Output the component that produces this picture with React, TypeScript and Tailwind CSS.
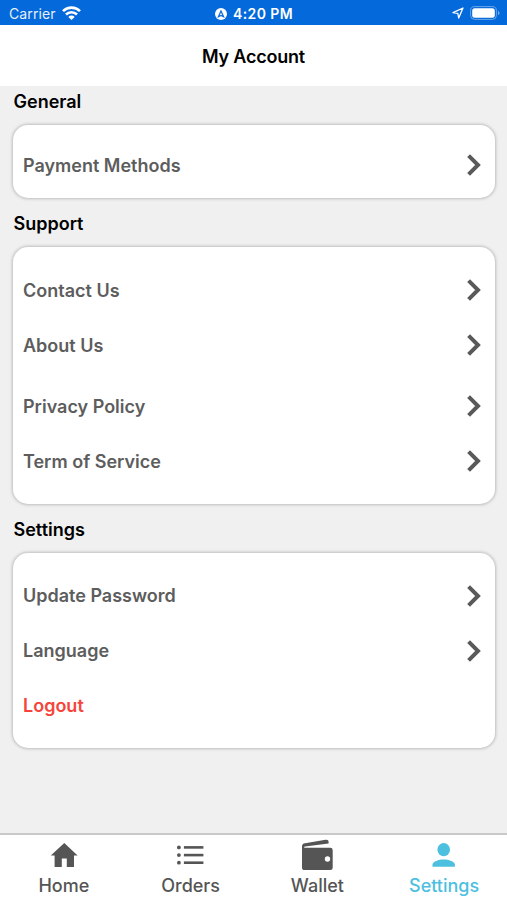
import { clsx } from "clsx";

type IconProps = { className?: string };

const ChevronIcon = () => (
  <svg className="h-6 w-4" viewBox="0 0 16 24" fill="none" stroke="#595959" strokeWidth="4" strokeLinecap="butt" strokeLinejoin="miter">
    <path d="M2.6 2.6 L12 12 L2.6 21.4" />
  </svg>
);

const HomeIcon = ({ className }: IconProps) => (
  <svg className={className} viewBox="0 0 32 32" fill="currentColor">
    <path d="M13.8 28v-8.6h5V28h7.2V16.4h3.6L16.3 4.1 2.8 16.4h3.8V28z" />
  </svg>
);

const OrdersIcon = ({ className }: IconProps) => (
  <svg className={className} viewBox="0 0 32 32" fill="currentColor">
    <circle cx="3.9" cy="8.4" r="1.9" />
    <circle cx="3.9" cy="16.1" r="1.9" />
    <circle cx="3.9" cy="23.7" r="1.9" />
    <rect x="8.9" y="7.1" width="19.5" height="2.6" />
    <rect x="8.9" y="14.8" width="19.5" height="2.6" />
    <rect x="8.9" y="22.4" width="19.5" height="2.6" />
  </svg>
);

const WalletIcon = ({ className }: IconProps) => (
  <svg className={className} viewBox="0 0 32 32" fill="currentColor">
    <path
      fillRule="evenodd"
      d="M4 8.8H29.3A2.4 2.4 0 0 1 31.7 11.2V28.7A2.4 2.4 0 0 1 29.3 31.1H3.6A2.6 2.6 0 0 1 1 28.5V7.4C1 5.5 2 4.6 4 4.3L24.6.8C26.5.5 27.5 1.3 27.6 2.8V4.4L4.2 7.5C2.6 7.7 2.6 8.8 4 8.8ZM26.5 17.3a2.7 2.7 0 1 0 0 5.4a2.7 2.7 0 0 0 0-5.4Z"
    />
  </svg>
);

const PersonIcon = ({ className }: IconProps) => (
  <svg className={className} viewBox="0 0 32 32" fill="currentColor">
    <ellipse cx="15.7" cy="10.6" rx="6.3" ry="6.6" />
    <path d="M4.5 27.7V25.4C4.7 22.4 10.7 20.4 15.7 20.4S26.7 22.4 26.9 25.4V27.7Z" />
  </svg>
);

const sections = [
  {
    title: "General",
    card: "pt-[12.5px] pb-[5.5px]",
    groups: [["Payment Methods"]],
  },
  {
    title: "Support",
    card: "pt-[15.5px] pb-[15px]",
    groups: [
      ["Contact Us", "About Us"],
      ["Privacy Policy", "Term of Service"],
    ],
  },
  {
    title: "Settings",
    card: "pt-[15.5px] pb-[15px]",
    groups: [["Update Password", "Language", "Logout"]],
  },
];

const tabs = [
  { label: "Home", icon: HomeIcon },
  { label: "Orders", icon: OrdersIcon },
  { label: "Wallet", icon: WalletIcon },
  { label: "Settings", icon: PersonIcon, active: true },
];

const StatusBar = () => (
  <div className="grid h-[25px] shrink-0 grid-cols-[1fr_auto_1fr] items-center bg-[#0469da] pt-[3px] pr-[7px] pl-[8px] text-white">
    <div className="flex items-center gap-1.5 pl-px">
      <span className="text-[14px] leading-none tracking-[0.1px] opacity-90">Carrier</span>
      <svg className="mb-0.5 h-3.5 w-[19px]" viewBox="0 0 19 14" fill="none" stroke="white" strokeWidth="2.7">
        <path d="M1 5.1a12.2 12.2 0 0 1 17 0" />
        <path d="M4 8.5a7.9 7.9 0 0 1 11 0" />
        <path d="M9.5 14 6.3 10.9a4.6 4.6 0 0 1 6.4 0Z" fill="white" stroke="none" />
      </svg>
    </div>
    <div className="flex items-center gap-1.5">
      <svg className="h-3 w-3" viewBox="0 0 12 12">
        <circle cx="6" cy="6" r="6" fill="white" />
        <path d="M6 3 8.6 8.8 6 7.5 3.4 8.8Z" fill="none" stroke="#0469da" strokeWidth="1.2" />
      </svg>
      <span className="text-[14px] leading-none font-semibold tracking-[0.4px]">4:20 PM</span>
    </div>
    <div className="mb-0.5 flex items-center justify-end gap-[6px]">
      <svg className="h-3 w-3" viewBox="0 0 12 12" fill="none" stroke="white" strokeWidth="1.3" strokeLinejoin="round">
        <path d="M11 1 1 5.7 5.8 6.4 6.7 11Z" />
      </svg>
      <svg className="h-3.5 w-[30px]" viewBox="0 0 30 14">
        <rect x="0.6" y="0.6" width="25.8" height="12.8" rx="4" fill="none" stroke="white" strokeOpacity="0.4" />
        <rect x="2.2" y="2.2" width="22.6" height="9.6" rx="2.5" fill="white" />
        <path d="M28 4.8v4.4q1.6-.8 1.6-2.2T28 4.8Z" fill="white" fillOpacity="0.45" />
      </svg>
    </div>
  </div>
);

const Row = ({ label }: { label: string }) => {
  const isLogout = label === "Logout";
  return (
    <button className="flex h-[55px] w-full items-center justify-between pr-[13px] pl-2.5 text-left">
      <span className={clsx("text-[18px] font-semibold", isLogout ? "text-[#f6443b]" : "text-[#5d5d5d]")}>{label}</span>
      {!isLogout && <ChevronIcon />}
    </button>
  );
};

export default function App() {
  return (
    <div className="flex h-[900px] w-[507px] flex-col overflow-hidden bg-[#f0f0f0] font-[Inter,sans-serif]">
      <StatusBar />
      <header className="flex h-[61px] shrink-0 items-center justify-center bg-white pt-px">
        <h1 className="text-[18px] font-semibold tracking-[-0.2px] text-black">My Account</h1>
      </header>

      <main className="flex-1">
        {sections.map((section) => (
          <section key={section.title} className="mb-2.5">
            <h2 className="mb-2 h-[31px] pl-[13.5px] text-[18px] leading-[31px] font-semibold text-black">{section.title}</h2>
            <div className={clsx("mr-[12.5px] ml-[13px] flex flex-col gap-1.5 rounded-[15px] bg-white shadow-[0_0_3px_1px_#bdbdbd]", section.card)}>
              {section.groups.map((group) => (
                <div key={group[0]}>
                  {group.map((label) => (
                    <Row key={label} label={label} />
                  ))}
                </div>
              ))}
            </div>
          </section>
        ))}
      </main>

      {/* Bottom tab bar */}
      <nav className="grid h-[67px] shrink-0 grid-cols-4 border-t-2 border-[#c8c8c8] bg-white">
        {tabs.map(({ label, icon: Icon, active }) => (
          <div key={label} className={clsx("flex flex-col items-center pt-1 pl-px", active ? "text-[#4dbfdf]" : "text-[#555555]")}>
            <Icon className="h-8 w-8" />
            <span className="text-[18px] leading-[30px] font-medium">{label}</span>
          </div>
        ))}
      </nav>
    </div>
  );
}
